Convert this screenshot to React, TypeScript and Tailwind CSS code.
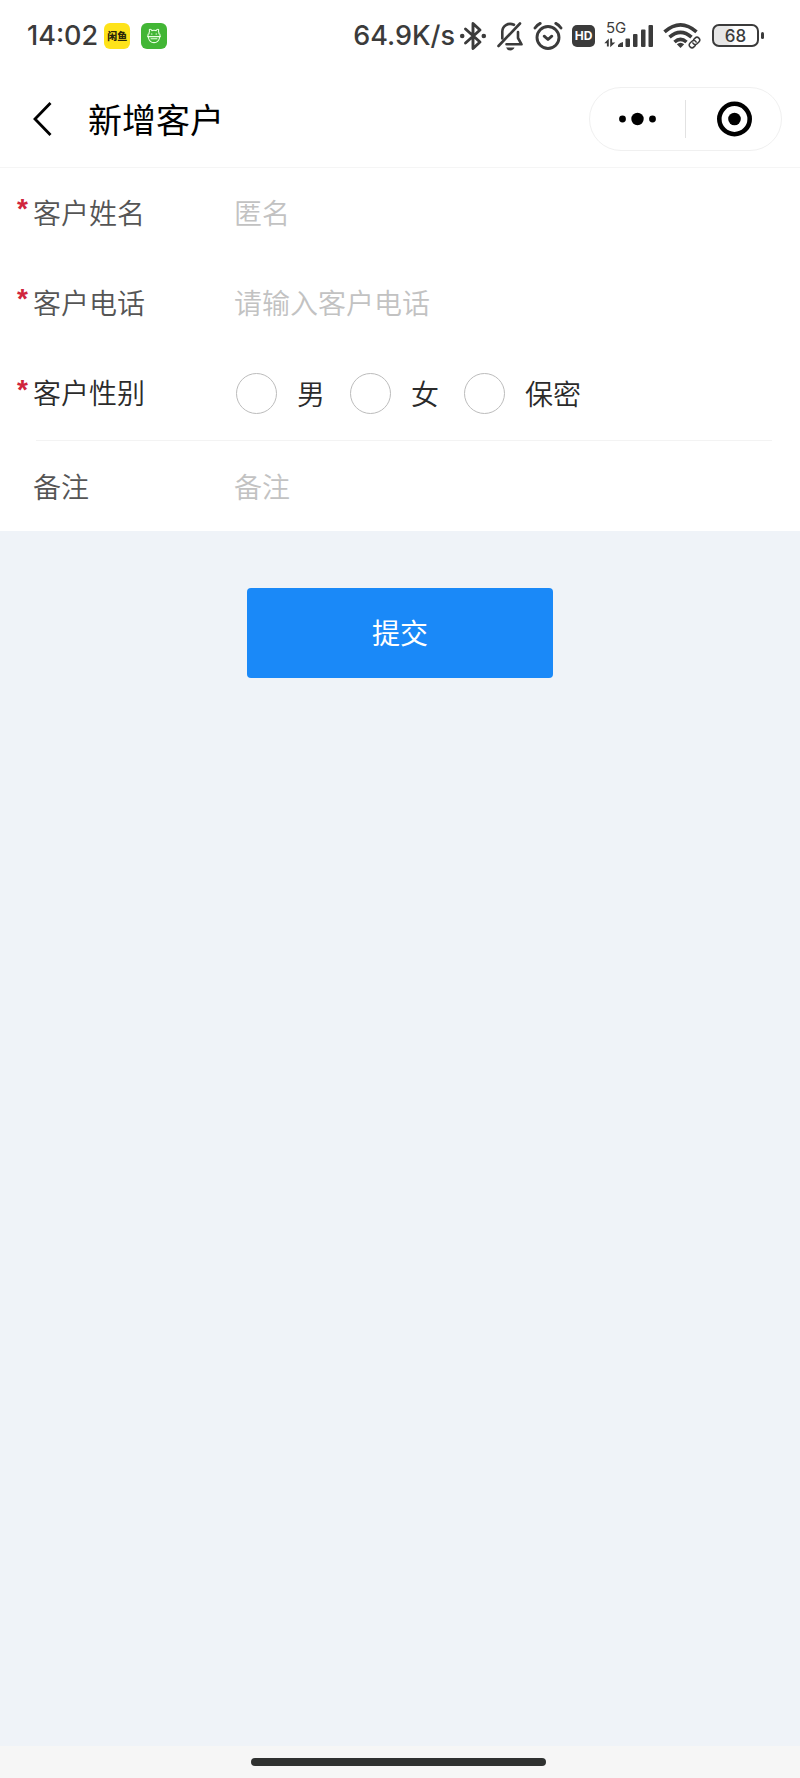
import React, { useState } from 'react';

interface TextField {
  id: string;
  label: string;
  placeholder: string;
  type: string;
}

const contactFields: TextField[] = [
  { id: 'name', label: '客户姓名', placeholder: '匿名', type: 'text' },
  { id: 'phone', label: '客户电话', placeholder: '请输入客户电话', type: 'tel' },
];

const genders = [
  { value: 'male', label: '男' },
  { value: 'female', label: '女' },
  { value: 'secret', label: '保密' },
];

const BluetoothIcon = () => (
  <svg width="28" height="30" viewBox="0 0 28 30" fill="none" stroke="#3b3b3b" strokeWidth="2.9" strokeLinecap="round" strokeLinejoin="round">
    <path d="M6.5 8 L21 21 L14 27.5 V2.5 L21 9 L6.5 22" />
    <circle cx="3.2" cy="15" r="2.3" fill="#3b3b3b" stroke="none" />
    <circle cx="24.8" cy="15" r="2.3" fill="#3b3b3b" stroke="none" />
  </svg>
);

const MutedBellIcon = () => (
  <svg width="28" height="30" viewBox="0 0 28 30" fill="none" stroke="#3b3b3b" strokeWidth="2.6" strokeLinecap="round" strokeLinejoin="round">
    <path d="M2.5 25 L24 2.5" />
    <path d="M18 3.8 C12 1 6.3 5 6.3 10.5 V17.5" />
    <path d="M22 11 V17 L25.5 23.3 H10.5" />
    <path d="M10 26.6 H18.5 Q17.5 29.4 14.2 29.4 Q11 29.4 10 26.6 Z" fill="#3b3b3b" stroke="none" />
  </svg>
);

const AlarmIcon = () => (
  <svg width="30" height="30" viewBox="0 0 30 30" fill="none" stroke="#3b3b3b" strokeWidth="2.9" strokeLinecap="round" strokeLinejoin="round">
    <circle cx="15" cy="16.5" r="11" />
    <path d="M11.2 15.2 L15 18.5 L18.8 15.2" />
    <path d="M2 7 Q4.2 3.8 7.2 2.4 M22.8 2.4 Q25.8 3.8 28 7" />
  </svg>
);

const SignalIcon = () => (
  <svg width="50" height="24" viewBox="0 0 50 24" fill="#3b3b3b">
    <path d="M0.3 19.2 L4.8 14.5 V22.5 H2.9 V19.2 Z M6.2 14.5 H8.1 V18.5 H11.3 L6.2 23.2 Z" />
    <path d="M14 23 V21 Q16 18.5 19 18 V23 Z" />
    <rect x="21.5" y="14.5" width="4.5" height="8.5" rx="1" />
    <rect x="29" y="10" width="4.5" height="13" rx="1" />
    <rect x="37" y="5.5" width="4.5" height="17.5" rx="1" />
    <rect x="44.5" y="1" width="4.5" height="22" rx="1" />
  </svg>
);

const WifiIcon = () => (
  <svg width="38" height="27" viewBox="0 0 38 27" fill="none" stroke="#3b3b3b" strokeWidth="3.6">
    <path d="M1.5 9.8 Q17.5 -4.2 33.5 9.8" />
    <path d="M6.5 15.2 Q17.5 5.6 28.5 15.2" />
    <path d="M11.5 20 Q17.5 14.8 23.5 20" />
    <path d="M13.8 22.3 Q17.5 19.3 21.2 22.3 L17.5 26 Z" fill="#3b3b3b" stroke="none" />
    <g strokeWidth="1.5" strokeLinecap="round" transform="rotate(-45 31.5 20.5)">
      <path d="M30 23.2 H28 a2.7 2.7 0 0 1 0 -5.4 H30.6 a2.7 2.7 0 0 1 2.4 3.6" />
      <path d="M33 17.8 H35 a2.7 2.7 0 0 1 0 5.4 H32.4 a2.7 2.7 0 0 1 -2.4 -3.6" />
    </g>
  </svg>
);

const MascotIcon = () => (
  <svg width="26" height="26" viewBox="0 0 26 26" fill="none" stroke="#e9ffe2" strokeWidth="1.1" strokeLinecap="round" strokeLinejoin="round">
    <path d="M8 10.8 Q8 9 8.6 8.4 Q7.8 6.2 9.2 6.2 Q10.4 6.2 10.8 7.6 Q13 7 15.2 7.6 Q15.6 6.2 16.8 6.2 Q18.2 6.2 17.4 8.4 Q18 9 18 10.8" />
    <path d="M7.5 13.8 V15 Q8.5 19.6 13 19.6 Q17.5 19.6 18.5 15 V13.8 M6.8 13.6 H19.2" />
    <path d="M7.2 11 L6.8 13.6 M18.8 11 L19.2 13.6 M10.4 11 H11 M15 11 H15.6 M10 15.8 H16" />
  </svg>
);

const StatusBar = () => (
  <div className="flex h-[71px] items-center justify-between bg-white pl-[27px] pr-9 font-[Inter,sans-serif] text-[27px] font-medium text-[#3b3b3b]">
    <div className="flex items-center">
      <span className="pt-[2px]">14:02</span>
      <span className="ml-[6px] flex h-[26px] w-[26px] items-center justify-center rounded-md bg-[#fee31a] font-['Noto_Sans_CJK_SC',sans-serif] text-[10px] font-black text-[#2a2608]">
        闲鱼
      </span>
      <span className="ml-[11px] rounded-md bg-[#42b635]">
        <MascotIcon />
      </span>
    </div>
    <div className="flex items-center">
      <span className="pt-[2px]">64.9K/s</span>
      <span className="ml-1 flex items-center gap-[9px]">
        <BluetoothIcon />
        <MutedBellIcon />
        <AlarmIcon />
        <span className="flex h-[22px] w-[23px] items-center justify-center rounded-[5px] bg-[#3b3b3b] text-[12px] font-bold text-white">
          HD
        </span>
        <span className="relative flex">
          <SignalIcon />
          <span className="absolute -top-1 left-[2px] text-[15px] leading-4 font-normal">5G</span>
        </span>
        <WifiIcon />
      </span>
      <span className="ml-[11px] flex items-center gap-[2px]">
        <span className="flex h-[23px] w-[47px] items-center justify-center rounded-[7px] border-2 border-[#3b3b3b] bg-linear-to-r from-[#e6e6e6] from-30% to-white to-50% text-[17px] leading-5">
          68
        </span>
        <span className="h-[7px] w-[3px] rounded-full bg-[#3b3b3b]" />
      </span>
    </div>
  </div>
);

const NavBar = () => (
  <header className="flex h-[97px] items-center justify-between border-b border-[#f5f5f5] bg-white pl-8 pr-[18px]">
    <div className="flex items-center">
      <button type="button" aria-label="返回">
        <svg width="20" height="36" viewBox="0 0 20 36" fill="none" stroke="#000" strokeWidth="2.8">
          <path d="M18.5 2 L3 18 L18.5 34" />
        </svg>
      </button>
      <h1 className="ml-9 pb-[2px] text-[34px] text-black">新增客户</h1>
    </div>
    <div className="flex h-16 w-[193px] items-center rounded-full border border-[#f0f0f0]">
      <button type="button" aria-label="更多" className="flex h-[38px] flex-1 items-center justify-center border-r border-[#e2e2e2]">
        <svg width="38" height="14" viewBox="0 0 38 14" fill="#000">
          <circle cx="3.5" cy="7" r="3.4" />
          <circle cx="18.5" cy="7" r="6.2" />
          <circle cx="33.5" cy="7" r="3.4" />
        </svg>
      </button>
      <button type="button" aria-label="关闭" className="flex flex-1 items-center justify-center">
        <svg width="36" height="36" viewBox="0 0 36 36">
          <circle cx="18.5" cy="18" r="15.2" fill="none" stroke="#000" strokeWidth="4.6" />
          <circle cx="18.5" cy="18" r="6.3" fill="#000" />
        </svg>
      </button>
    </div>
  </header>
);

const RequiredMark = () => (
  <span aria-hidden="true" className="w-4 pb-[6px] font-['Liberation_Sans',sans-serif] text-[28px] leading-8 font-bold text-[#d0253c]">
    *
  </span>
);

const App: React.FC = () => {
  const [gender, setGender] = useState('');

  return (
    <div className="flex min-h-screen flex-col bg-[#eff3f8] font-['Noto_Sans_CJK_SC',sans-serif]">
      <StatusBar />
      <NavBar />

      <form className="flex flex-col" onSubmit={(e) => e.preventDefault()}>
        <div className="bg-white text-[28px] font-[350] text-[#555]">
          {contactFields.map((field) => (
            <div key={field.id} className="flex h-[90px] items-center pb-[2px] pl-[17px] pr-7">
              <RequiredMark />
              <label htmlFor={field.id} className="w-[201px]">
                {field.label}
              </label>
              <input
                id={field.id}
                type={field.type}
                placeholder={field.placeholder}
                className="min-w-0 flex-1 text-[#2b2b2b] outline-none placeholder:text-[#c2c2c2]"
              />
            </div>
          ))}

          {/* Gender */}
          <div
            role="radiogroup"
            aria-labelledby="gender-label"
            className="flex h-[92px] items-center pb-[2px] pl-[17px] pr-7 text-[#2b2b2b]"
          >
            <RequiredMark />
            <span id="gender-label" className="w-[203px] pb-[2px]">
              客户性别
            </span>
            <div className="flex items-center gap-[25px]">
              {genders.map((item) => (
                <label key={item.value} className="flex items-center gap-5">
                  <input
                    type="radio"
                    name="gender"
                    value={item.value}
                    checked={gender === item.value}
                    onChange={() => setGender(item.value)}
                    className="h-[41px] w-[41px] appearance-none rounded-full border border-[#bcbcbc] checked:border-[12px] checked:border-[#1a89f8]"
                  />
                  {item.label}
                </label>
              ))}
            </div>
          </div>

          <hr className="ml-9 mr-7 border-[#f3f3f3]" />

          <div className="flex h-[90px] items-center pl-[33px] pr-7">
            <label htmlFor="remark" className="w-[201px]">
              备注
            </label>
            <input
              id="remark"
              type="text"
              placeholder="备注"
              className="min-w-0 flex-1 text-[#2b2b2b] outline-none placeholder:text-[#c2c2c2]"
            />
          </div>
        </div>

        <button type="submit" className="mx-auto mt-[57px] h-[90px] w-[306px] rounded bg-[#1a89f8] pb-[2px] text-[28px] text-white">
          提交
        </button>
      </form>

      {/* Home indicator */}
      <div className="mt-auto flex h-8 items-center justify-center bg-[#f6f6f6] pr-1">
        <span className="h-2 w-[295px] rounded-full bg-[#2f3130]" />
      </div>
    </div>
  );
};

export default App;
